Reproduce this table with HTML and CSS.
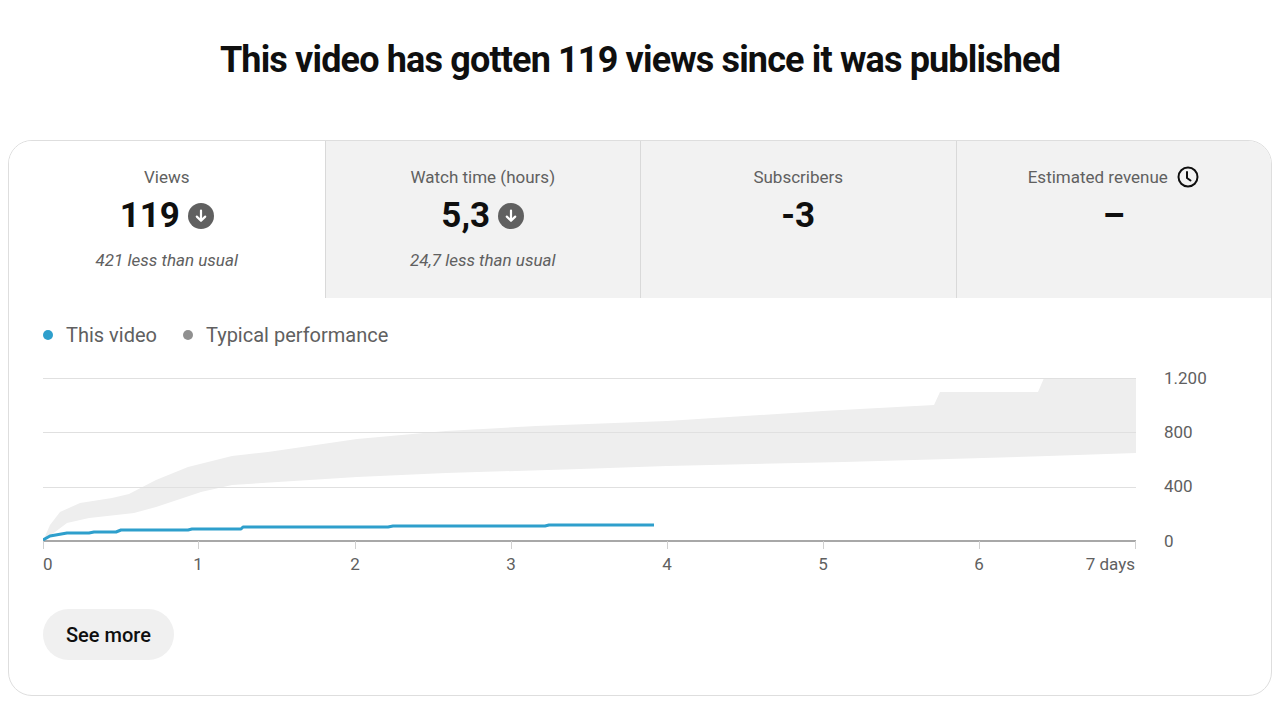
FILE: index.html
```html
<!DOCTYPE html>
<html>
<head>
<meta charset="utf-8">
<link rel="stylesheet" href="styles.css">
</head>
<body>
<h1 class="title">This video has gotten 119 views since it was published</h1>
<section class="card">
  <div class="tabs">
    <div class="tab tab-active">
      <div class="tab-label">Views</div>
      <div class="tab-value">119 <span class="down"><svg viewBox="0 0 26 26" width="26" height="26"><circle cx="13" cy="13" r="13" fill="#606060"/><path d="M13 7.5v10M8.8 13.6l4.2 4.2 4.2-4.2" stroke="#fff" stroke-width="2.2" fill="none" stroke-linecap="round" stroke-linejoin="round"/></svg></span></div>
      <div class="tab-sub">421 less than usual</div>
    </div>
    <div class="tab">
      <div class="tab-label">Watch time (hours)</div>
      <div class="tab-value">5,3 <span class="down"><svg viewBox="0 0 26 26" width="26" height="26"><circle cx="13" cy="13" r="13" fill="#606060"/><path d="M13 7.5v10M8.8 13.6l4.2 4.2 4.2-4.2" stroke="#fff" stroke-width="2.2" fill="none" stroke-linecap="round" stroke-linejoin="round"/></svg></span></div>
      <div class="tab-sub">24,7 less than usual</div>
    </div>
    <div class="tab">
      <div class="tab-label">Subscribers</div>
      <div class="tab-value">-3</div>
    </div>
    <div class="tab">
      <div class="tab-label">Estimated revenue <span class="clock"><svg viewBox="0 0 24 24" width="24" height="24"><circle cx="12" cy="12" r="9.5" stroke="#0f0f0f" stroke-width="2" fill="none"/><path d="M11 7v6l3.5 2.5" stroke="#0f0f0f" stroke-width="2" fill="none" stroke-linecap="round" stroke-linejoin="round"/></svg></span></div>
      <div class="tab-value">–</div>
    </div>
  </div>
  <div class="chart-wrap">
    <div class="legend">
      <span class="legend-item"><span class="dot dot-blue"></span>This video</span>
      <span class="legend-item"><span class="dot dot-gray"></span>Typical performance</span>
    </div>
    <svg class="chart" width="1200" height="210" viewBox="43 368 1200 210">
      <path d="M43 541 L50 525 L60 512 L80 503 L112 498 L129 494 L156 480 L188 467 L232 456 L268 452 L357 439 L446 431 L536 426 L667 421 L823 411 L934 405 L940 392 L1038 392 L1044 378 L1136 378 L1136 453 L1048 456 L844 462 L667 466 L580 469 L446 473 L357 477 L232 485 L201 492 L156 507 L134 513 L89 518 L67 523 Z" fill="#eeeeee"/>
      <g stroke="#e0e0e0" stroke-width="1">
        <line x1="43" y1="378.5" x2="1136" y2="378.5"/>
        <line x1="43" y1="432.5" x2="1136" y2="432.5"/>
        <line x1="43" y1="487.5" x2="1136" y2="487.5"/>
      </g>
      <line x1="43" y1="541" x2="1136" y2="541" stroke="#a8a8a8" stroke-width="2"/>
      <g stroke="#d0d0d0" stroke-width="1">
        <line x1="43.5" y1="541" x2="43.5" y2="549"/>
        <line x1="198.5" y1="541" x2="198.5" y2="549"/>
        <line x1="355.5" y1="541" x2="355.5" y2="549"/>
        <line x1="511.5" y1="541" x2="511.5" y2="549"/>
        <line x1="667.5" y1="541" x2="667.5" y2="549"/>
        <line x1="823.5" y1="541" x2="823.5" y2="549"/>
        <line x1="979.5" y1="541" x2="979.5" y2="549"/>
        <line x1="1135.5" y1="541" x2="1135.5" y2="549"/>
      </g>
      <path d="M43 540 L50 536 L67 533 L89 533 L94 532 L116 532 L121 530 L188 530 L192 529 L241 529 L243 527 L388 527 L393 526 L545 526 L549 525 L654 525" stroke="#2e9fcc" stroke-width="3" fill="none" stroke-linejoin="round"/>
      <g class="axis-text">
        <text x="43" y="570">0</text>
        <text x="198" y="570" text-anchor="middle">1</text>
        <text x="355" y="570" text-anchor="middle">2</text>
        <text x="511" y="570" text-anchor="middle">3</text>
        <text x="667" y="570" text-anchor="middle">4</text>
        <text x="823" y="570" text-anchor="middle">5</text>
        <text x="979" y="570" text-anchor="middle">6</text>
        <text x="1135" y="570" text-anchor="end">7 days</text>
        <text x="1164" y="384">1.200</text>
        <text x="1164" y="438">800</text>
        <text x="1164" y="492">400</text>
        <text x="1164" y="547">0</text>
      </g>
    </svg>
    <button class="see-more">See more</button>
  </div>
</section>
</body>
</html>
```
FILE: styles.css
```css
* { box-sizing: border-box; }
body {
  margin: 0;
  background: #fff;
  font-family: Roboto, "Liberation Sans", sans-serif;
  color: #0f0f0f;
}
.title {
  margin: 38px 0 58px;
  font-size: 36px;
  line-height: 44px;
  font-weight: 700;
  letter-spacing: -0.85px;
  text-align: center;
  color: #0f0f0f;
}
.card {
  margin: 0 8px;
  border: 1px solid #dedede;
  border-radius: 24px;
  overflow: hidden;
  height: 556px;
}
.tabs {
  display: grid;
  grid-template-columns: repeat(4, 1fr);
  height: 157px;
}
.tab {
  background: #f2f2f2;
  border-left: 1px solid #d9d9d9;
  display: flex;
  flex-direction: column;
  align-items: center;
  padding-top: 24px;
}
.tab-active {
  background: #fff;
  border-left: none;
}
.tab-label {
  font-size: 17px;
  line-height: 24px;
  color: #606060;
  display: flex;
  align-items: center;
  gap: 8px;
}
.clock { display: inline-flex; }
.tab-value {
  margin-top: 7px;
  font-size: 35px;
  line-height: 40px;
  font-weight: 700;
  display: flex;
  align-items: center;
  gap: 8px;
}
.down { display: inline-flex; }
.tab-sub {
  margin-top: 12px;
  font-size: 17px;
  line-height: 24px;
  font-style: italic;
  color: #606060;
}
.chart-wrap {
  padding: 24px 0 0 34px;
}
.legend {
  display: flex;
  gap: 26px;
  font-size: 20px;
  line-height: 26px;
  color: #606060;
}
.legend-item {
  display: flex;
  align-items: center;
  gap: 13px;
}
.dot {
  width: 10px;
  height: 10px;
  border-radius: 50%;
}
.dot-blue { background: #2e9fcc; }
.dot-gray { background: #909090; }
.chart {
  display: block;
  margin-top: 20px;
}
.axis-text text {
  font-family: Roboto, "Liberation Sans", sans-serif;
  font-size: 17px;
  fill: #606060;
}
.see-more {
  display: block;
  margin-top: 31px;
  height: 51px;
  padding: 0 23px;
  border: none;
  border-radius: 26px;
  background: #f0f0f0;
  font-family: Roboto, "Liberation Sans", sans-serif;
  font-size: 20px;
  font-weight: 500;
  color: #0f0f0f;
}
```
